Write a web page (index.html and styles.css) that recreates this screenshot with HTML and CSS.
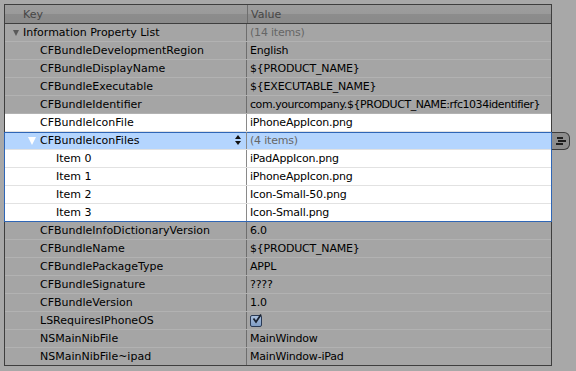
FILE: index.html
```html
<!DOCTYPE html>
<html>
<head>
<meta charset="utf-8">
<link rel="stylesheet" href="styles.css">
</head>
<body>
<div class="plist">
  <div class="head">
    <div class="kcol"><span class="htext">Key</span></div>
    <div class="vcol"><span class="htext">Value</span></div>
  </div>
  <div class="row"><div class="key l0"><span class="tri"></span>Information Property List</div><div class="val dim">(14 items)</div></div>
  <div class="row"><div class="key l1">CFBundleDevelopmentRegion</div><div class="val">English</div></div>
  <div class="row"><div class="key l1">CFBundleDisplayName</div><div class="val">${PRODUCT_NAME}</div></div>
  <div class="row"><div class="key l1">CFBundleExecutable</div><div class="val">${EXECUTABLE_NAME}</div></div>
  <div class="row"><div class="key l1">CFBundleIdentifier</div><div class="val tight">com.yourcompany.${PRODUCT_NAME:rfc1034identifier}</div></div>
  <div class="row white"><div class="key l1">CFBundleIconFile</div><div class="val">iPhoneAppIcon.png</div></div>
  <div class="group">
    <div class="row sel"><div class="key l1b"><span class="tri wtri"></span>CFBundleIconFiles<span class="stepper"><span class="up"></span><span class="dn"></span></span></div><div class="val dim">(4 items)</div></div>
    <div class="row white"><div class="key l2">Item 0</div><div class="val">iPadAppIcon.png</div></div>
    <div class="row white"><div class="key l2">Item 1</div><div class="val">iPhoneAppIcon.png</div></div>
    <div class="row white"><div class="key l2">Item 2</div><div class="val">Icon-Small-50.png</div></div>
    <div class="row white last"><div class="key l2">Item 3</div><div class="val">Icon-Small.png</div></div>
    <div class="menubtn"><span class="b1"></span><span class="b2"></span><span class="b3"></span></div>
  </div>
  <div class="row"><div class="key l1">CFBundleInfoDictionaryVersion</div><div class="val">6.0</div></div>
  <div class="row"><div class="key l1">CFBundleName</div><div class="val">${PRODUCT_NAME}</div></div>
  <div class="row"><div class="key l1">CFBundlePackageType</div><div class="val">APPL</div></div>
  <div class="row"><div class="key l1">CFBundleSignature</div><div class="val">????</div></div>
  <div class="row"><div class="key l1">CFBundleVersion</div><div class="val">1.0</div></div>
  <div class="row"><div class="key l1">LSRequiresIPhoneOS</div><div class="val"><span class="check"><svg width="12" height="12" viewBox="0 0 12 12"><path d="M2.5 5.5 L5 9 L10 1.5" fill="none" stroke="#1a2230" stroke-width="1.8"/></svg></span></div></div>
  <div class="row"><div class="key l1">NSMainNibFile</div><div class="val">MainWindow</div></div>
  <div class="row lastrow"><div class="key l1">NSMainNibFile~ipad</div><div class="val">MainWindow-iPad</div></div>
</div>
</body>
</html>
```
FILE: styles.css
```css
html, body {
  margin: 0;
  padding: 0;
  background: #a8a8a8;
  width: 576px;
  height: 371px;
  overflow: hidden;
}
body {
  font-family: "DejaVu Sans", "Lucida Grande", sans-serif;
  font-size: 11px;
  color: #000;
}
.plist {
  margin: 4px 0 0 4px;
  width: 546px;
  border: 1px solid #3e3e3e;
  background: #a5a5a5;
  position: relative;
}
.head {
  display: flex;
  height: 18px;
  background: linear-gradient(#9d9d9d 0%, #9a9a9a 50%, #8c8c8c 51%, #8a8a8a 100%);
  border-bottom: 1px solid #3e3e3e;
}
.kcol {
  width: 242px;
  border-right: 1px solid #6e6e6e;
  display: flex;
  align-items: center;
}
.vcol {
  flex: 1;
  display: flex;
  align-items: center;
}
.htext {
  color: #464646;
  padding-left: 18px;
}
.vcol .htext { padding-left: 3px; }
.row {
  display: flex;
  height: 17px;
  border-bottom: 1px solid #b2b2b2;
  line-height: 17px;
}
.row.lastrow { border-bottom: none; }
.key {
  width: 242px;
  border-right: 1px solid #6e6e6e;
  white-space: nowrap;
  position: relative;
  box-sizing: border-box;
}
.val {
  flex: 1;
  padding-left: 3px;
  white-space: nowrap;
  overflow: hidden;
  letter-spacing: -0.2px;
}
.val.tight { letter-spacing: -0.45px; }
.dim { color: #666; }
.l0 { padding-left: 8px; display: flex; align-items: center; }
.l1 { padding-left: 35px; }
.l1b { padding-left: 23px; display: flex; align-items: center; }
.l2 { padding-left: 51px; }
.tri {
  display: inline-block;
  width: 0;
  height: 0;
  border-left: 3.5px solid transparent;
  border-right: 3.5px solid transparent;
  border-top: 6px solid #5a5a5a;
  margin-right: 4px;
  margin-top: 1px;
}
.wtri {
  border-left-width: 4px;
  border-right-width: 4px;
  border-top: 8px solid #fff;
  margin-right: 4px;
}
.white { background: #fff; border-bottom-color: #e2e2e2; }
.white .key { border-right-color: #8a8a8a; }
.sel { background: #b4d5fe; border-bottom-color: #e2e2e2; }
.sel .key { border-right-color: #8a8a8a; }
.group {
  position: relative;
  margin: 0 -1px;
  padding: 0 1px;
  outline: 1px solid #2f66b6;
  outline-offset: -1px;
}
.group .row.last { border-bottom: 1px solid #b2b2b2; }
.stepper {
  position: absolute;
  right: 5px;
  top: 3px;
  display: flex;
  flex-direction: column;
  gap: 2px;
}
.up, .dn {
  width: 0;
  height: 0;
  border-left: 3px solid transparent;
  border-right: 3px solid transparent;
}
.up { border-bottom: 4px solid #111; }
.dn { border-top: 4px solid #111; }
.check {
  display: inline-block;
  width: 10px;
  height: 10px;
  margin-top: 3px;
  border: 1px solid #2a3a55;
  border-radius: 2px;
  background: linear-gradient(#aabfdc, #7f9cc4);
  position: relative;
  vertical-align: top;
}
.check svg {
  position: absolute;
  left: 0;
  top: -3px;
}
.menubtn {
  position: absolute;
  left: 548px;
  top: 0;
  width: 18px;
  height: 18px;
  background: #8d8d8d;
  border: 1px solid #3a3a3a;
  border-left: none;
  border-radius: 0 6px 6px 0;
  display: flex;
  flex-direction: column;
  justify-content: center;
  align-items: flex-start;
  gap: 1px;
  padding-left: 4px;
  box-sizing: border-box;
}
.menubtn span {
  height: 2px;
  background: #1e1e1e;
  display: block;
}
.b1 { width: 6px; margin-left: 1px; }
.b2 { width: 8px; margin-left: 2px; }
.b3 { width: 7px; margin-left: 0px; }
```
